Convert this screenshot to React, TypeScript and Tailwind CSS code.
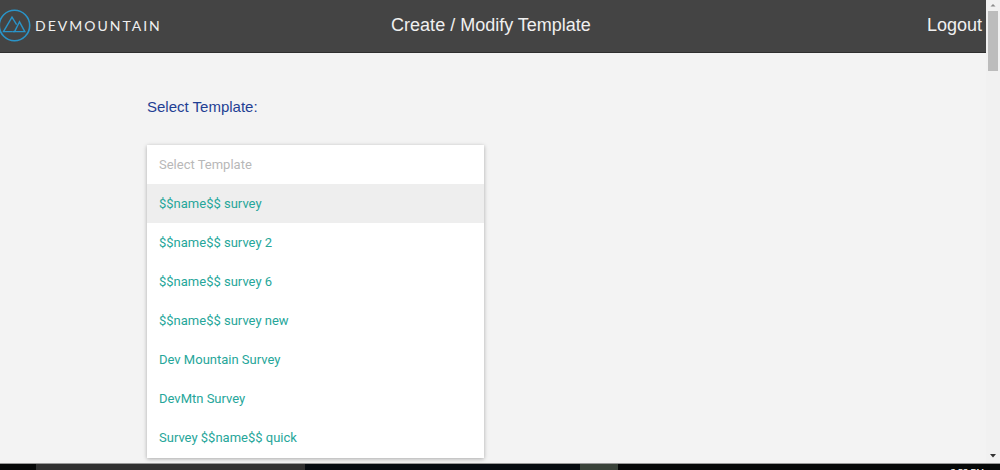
import React, { useState } from "react";

const templates: string[] = [
  "$$name$$ survey",
  "$$name$$ survey 2",
  "$$name$$ survey 6",
  "$$name$$ survey new",
  "Dev Mountain Survey",
  "DevMtn Survey",
  "Survey $$name$$ quick",
];

function Logo() {
  return (
    <a href="#home" className="flex items-center gap-1 text-[#f0f0f0]">
      <svg width="31" height="34" viewBox="0 0 31 34" fill="none" stroke="#2a94c8" aria-hidden="true">
        <circle cx="14.5" cy="16.5" r="15.2" strokeWidth="1.6" />
        <path d="M16.6 15.6 L12 8.2 L3.5 22.6 H12.8 M14.6 22.6 H24.8 L19.5 12.8 Z" strokeWidth="1.4" />
        <path d="M12.8 22.6 H14.6" strokeWidth="1.4" />
      </svg>
      <span className="font-['Lato',sans-serif] text-[14px] leading-5 tracking-[2px]">DEVMOUNTAIN</span>
    </a>
  );
}

function Header() {
  return (
    <header className="grid h-[53px] grid-cols-[1fr_auto_1fr] items-center border-b border-[#2e2e2e] bg-[#444444] pr-1 font-['Liberation_Sans',sans-serif] text-[18px] leading-6 text-[#f0f0f0]">
      <Logo />
      <h1 className="pb-0.5">Create / Modify Template</h1>
      <a href="#logout" className="justify-self-end pb-0.5">Logout</a>
    </header>
  );
}

function TemplatePicker() {
  const [selected, setSelected] = useState(0);
  return (
    <main className="flex-1 px-[147px] pt-11">
      <h2 id="picker-label" className="font-['Liberation_Sans',sans-serif] text-[15px] leading-5 text-[#1f3f93]">
        Select Template:
      </h2>
      <div
        role="listbox"
        aria-labelledby="picker-label"
        className="mt-7 w-full max-w-[337px] bg-white pb-px font-['Roboto',sans-serif] text-[13px] text-[#26a69a] shadow-[0_1px_4px_rgba(0,0,0,0.3)]"
      >
        <div className="flex h-[39px] items-center px-3 text-[#b8b8b8]">Select Template</div>
        {templates.map((name, index) => (
          <button
            key={name}
            type="button"
            role="option"
            aria-selected={index === selected}
            onClick={() => setSelected(index)}
            className={
              index === selected
                ? "flex h-[39px] w-full items-center bg-[#eeeeee] px-3"
                : "flex h-[39px] w-full items-center px-3"
            }
          >
            {name}
          </button>
        ))}
      </div>
    </main>
  );
}

function ScrollBar() {
  return (
    <div aria-hidden="true" className="flex w-[14px] flex-col items-center bg-[#f1f1f1]">
      <svg width="14" height="11" viewBox="0 0 14 11">
        <path d="M4.5 6.5 L7 4 L9.5 6.5 Z" fill="#8a8a8a" />
      </svg>
      <div className="h-[60px] w-[10px] bg-[#bcbcbc]" />
      <div className="flex-1" />
      <svg width="14" height="15" viewBox="0 0 14 15">
        <path d="M4 6 L7 9.5 L10 6 Z" fill="#333333" />
      </svg>
    </div>
  );
}

function TaskBar() {
  return (
    <footer className="flex h-[7px] overflow-hidden border-t border-[#999999] bg-[#060808]">
      <div className="w-9" />
      <div className="w-[269px] bg-[#303030]" />
      <div className="flex-1 bg-[#060b10]" />
      <div className="w-[38px] bg-[#394239]" />
      <div className="flex w-[382px] justify-end pr-4 pt-[3px] font-['Liberation_Sans',sans-serif] text-[9px] leading-[10px] text-white">
        <time>3:53 PM</time>
      </div>
    </footer>
  );
}

export default function App() {
  return (
    <div className="flex min-h-screen flex-col bg-[#f3f3f3]">
      <div className="flex flex-1">
        <div className="flex flex-1 flex-col">
          <Header />
          <TemplatePicker />
        </div>
        <ScrollBar />
      </div>
      <TaskBar />
    </div>
  );
}
